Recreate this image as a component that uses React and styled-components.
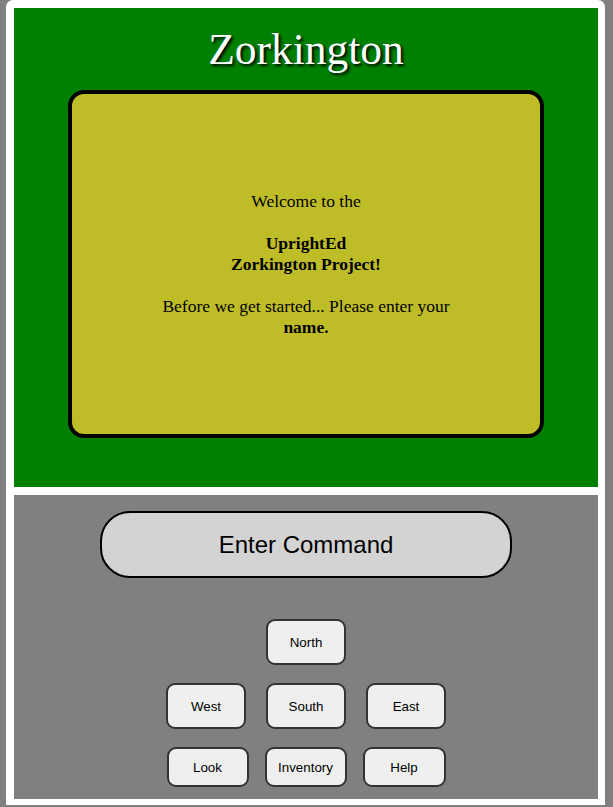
import React from "react";
import styled, { createGlobalStyle } from "styled-components";

const GlobalStyle = createGlobalStyle`
  html, body {
    margin: 0;
    padding: 0;
    background: #808080;
  }
`;

const Frame = styled.div`
  box-sizing: border-box;
  margin-left: 6px;
  width: 599px;
  background: #ffffff;
  border-radius: 7px 7px 0 0;
  padding: 8px 7px 6px 8px;
  display: flex;
  flex-direction: column;
  gap: 8px;
`;

const GamePanel = styled.section`
  box-sizing: border-box;
  height: 479px;
  background: #008000;
  display: flex;
  flex-direction: column;
  align-items: center;
`;

const Title = styled.h1`
  margin: 0;
  height: 82px;
  line-height: 82px;
  font-family: "Liberation Serif", "Times New Roman", serif;
  font-weight: normal;
  font-size: 43.5px;
  color: #ffffff;
  text-shadow: 2px 2px 3px #000000;
`;

const StoryBox = styled.div`
  box-sizing: border-box;
  width: 476px;
  height: 348px;
  border: 4px solid #000000;
  border-radius: 16px;
  background: #bfbd27;
  display: flex;
  align-items: center;
  justify-content: center;
`;

const StoryText = styled.p`
  margin: 0;
  max-width: 300px;
  text-align: center;
  font-family: "Liberation Serif", "Times New Roman", serif;
  font-size: 17.5px;
  line-height: 21px;
  color: #000000;
`;

const ControlPanel = styled.section`
  box-sizing: border-box;
  height: 304px;
  background: #808080;
  padding-top: 16px;
  display: flex;
  flex-direction: column;
  align-items: center;
`;

const CommandInput = styled.input`
  box-sizing: border-box;
  width: 412px;
  height: 67px;
  border: 2px solid #000000;
  border-radius: 30px;
  background: #d3d3d3;
  font-family: "Liberation Sans", Arial, sans-serif;
  font-size: 24px;
  text-align: center;
  color: #000000;
  outline: none;
  &::placeholder {
    color: #000000;
    opacity: 1;
  }
`;

const Pad = styled.div`
  margin-top: 41px;
  display: flex;
  flex-direction: column;
  align-items: center;
  gap: 18px;
`;

const PadRow = styled.div`
  display: flex;
  gap: ${(p) => p.$gap || 20}px;
`;

const PadButton = styled.button`
  box-sizing: border-box;
  width: ${(p) => p.$w || 80}px;
  height: ${(p) => p.$h || 46}px;
  border: 2px solid #333333;
  border-radius: 9px;
  background: #efefef;
  color: #000000;
  font-family: "Liberation Sans", Arial, sans-serif;
  font-size: 13.33px;
  padding: 0;
  cursor: pointer;
`;

export default function App() {
  return (
    <>
      <GlobalStyle />
      <Frame>
        <GamePanel>
          <Title>Zorkington</Title>
          <StoryBox>
            <StoryText>
              Welcome to the
              <br />
              <br />
              <b>
                UprightEd
                <br />
                Zorkington Project!
              </b>
              <br />
              <br />
              Before we get started... Please enter your <b>name.</b>
            </StoryText>
          </StoryBox>
        </GamePanel>
        <ControlPanel>
          <CommandInput placeholder="Enter Command" />
          <Pad>
            <PadRow>
              <PadButton>North</PadButton>
            </PadRow>
            <PadRow>
              <PadButton>West</PadButton>
              <PadButton>South</PadButton>
              <PadButton>East</PadButton>
            </PadRow>
            <PadRow $gap={16}>
              <PadButton $w={82} $h={40}>Look</PadButton>
              <PadButton $w={82} $h={40}>Inventory</PadButton>
              <PadButton $w={83} $h={40}>Help</PadButton>
            </PadRow>
          </Pad>
        </ControlPanel>
      </Frame>
    </>
  );
}
